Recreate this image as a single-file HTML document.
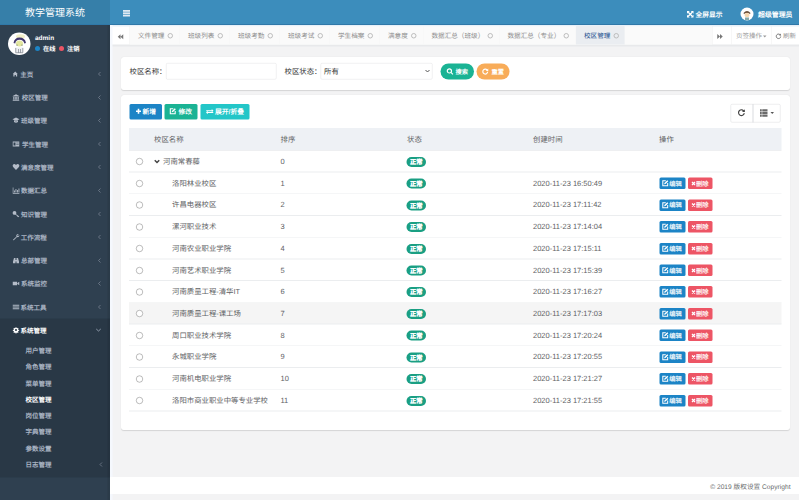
<!DOCTYPE html>
<html lang="zh-CN">
<head>
<meta charset="utf-8">
<style>
html,body{margin:0;padding:0;width:799px;height:500px;overflow:hidden;background:#f3f3f4;}
*{box-sizing:border-box;}
#stage{text-rendering:geometricPrecision;position:absolute;left:0;top:0;width:1598px;height:1000px;transform:scale(0.5);transform-origin:0 0;font-family:"Liberation Sans",sans-serif;font-size:13px;color:#676a6c;background:#f3f3f4;overflow:hidden;}
.a{position:absolute;}
svg.a{overflow:visible;}
.mt{position:absolute;white-space:nowrap;color:#a7b1c2;font-weight:bold;font-size:13px;line-height:20px;}
.mn{-webkit-text-stroke:0;}
.nb{font-weight:bold;-webkit-text-stroke:0;}
.t{position:absolute;white-space:nowrap;font-size:14.75px;color:#5e6164;line-height:20px;}
.radio{position:absolute;width:14px;height:14px;border:1.8px solid #7a7a7a;border-radius:50%;background:#fff;}
.badge{position:absolute;width:39px;height:20px;border-radius:10px;background:#1a9f83;color:#fff;font-size:12.5px;font-weight:bold;-webkit-text-stroke:0.3px #fff;text-align:center;line-height:20px;}
.be{position:absolute;height:23px;border-radius:3px;color:#fff;font-size:12.5px;line-height:23px;white-space:nowrap;}
.hl{position:absolute;height:1.5px;background:#ebedef;}
</style>
</head>
<body>
<div id="stage">

<div class="a" style="left:0;top:0;width:220px;height:1000px;background:#2f4050"></div>
<div class="a" style="left:0;top:0;width:220px;height:50px;background:#367fa9"></div>
<div class="a" style="left:0;top:0;width:220px;height:50px;color:#fff;font-size:20px;text-align:center;line-height:50px;white-space:nowrap">教学管理系统</div>
<div class="a" style="left:0;top:637px;width:220px;height:318px;background:#293846"></div>
<div class="a" style="left:215px;top:50px;width:5px;height:950px;background:rgba(0,0,0,.08)"></div>
<div class="a" style="left:16px;top:65px;width:45px;height:45px;border-radius:50%;background:#fff;overflow:hidden"><svg width="45" height="45" viewBox="0 0 45 45"><ellipse cx="25" cy="8" rx="9" ry="4.5" fill="#f1efc8"/><path d="M11 21 Q13 10 23 10 Q34 10 36 21 L32.5 22 Q31 14.5 23 14.5 Q15.5 14.5 14.5 22Z" fill="#43386e"/><ellipse cx="23" cy="22" rx="7" ry="6" fill="#e3e7a0"/><path d="M14 30 h17 v11 h-17z" fill="#eef0f2"/><path d="M15.5 31 v9 M21 33 v8 M25 33 v8 M29.5 31 v9 M15 40.5 h15" stroke="#8a8f98" stroke-width="1.6" fill="none"/><circle cx="18" cy="25" r="1.2" fill="#55606a"/><circle cx="28" cy="25" r="1.2" fill="#55606a"/></svg></div>
<div class="mt nb" style="left:70px;top:66px;color:#fff;font-size:13px">admin</div>
<div class="a" style="left:70px;top:92px;width:10px;height:10px;border-radius:50%;background:#1c84c6"></div>
<div class="mt nb" style="left:86px;top:87px;color:#fff;font-size:12.5px">在线</div>
<div class="a" style="left:118px;top:92px;width:10px;height:10px;border-radius:50%;background:#ed5565"></div>
<div class="mt nb" style="left:134px;top:87px;color:#fff;font-size:12.5px">注销</div>
<svg class="a" style="left:25.0px;top:141.0px" width="14" height="14" viewBox="0 0 14 14" fill="#b4bcc8"><path d="M0.5 7 L5.5 2 L10.5 7 L9.3 7 L9.3 12 L6.8 12 L6.8 9 L4.2 9 L4.2 12 L1.7 12 L1.7 7Z"/></svg>
<div class="mt nb" style="left:40.5px;top:139.0px;color:#aab4c3">主页</div>
<svg class="a" style="left:195px;top:143.0px" width="8" height="10" viewBox="0 0 8 10"><path d="M6 1 L2 5 L6 9" stroke="#7f8a99" stroke-width="1.4" fill="none"/></svg>
<svg class="a" style="left:25.0px;top:187.6px" width="14" height="14" viewBox="0 0 14 14" fill="#b4bcc8"><path d="M7 0.5 L13.5 4 L13.5 5 L0.5 5 L0.5 4Z M1.5 6 h2 v5 h-2z M4.5 6 h2 v5 h-2z M7.5 6 h2 v5 h-2z M10.5 6 h2 v5 h-2z M0.5 11.5 h13 v2 h-13z"/></svg>
<div class="mt nb" style="left:43.5px;top:185.6px;color:#aab4c3">校区管理</div>
<svg class="a" style="left:195px;top:189.6px" width="8" height="10" viewBox="0 0 8 10"><path d="M6 1 L2 5 L6 9" stroke="#7f8a99" stroke-width="1.4" fill="none"/></svg>
<svg class="a" style="left:25.0px;top:234.2px" width="14" height="14" viewBox="0 0 14 14" fill="#b4bcc8"><path d="M7 1 L14 4.5 L7 8 L0 4.5Z M3 6.5 L3 10 Q7 13 11 10 L11 6.5 L7 9Z"/></svg>
<div class="mt nb" style="left:42px;top:232.2px;color:#aab4c3">班级管理</div>
<svg class="a" style="left:195px;top:236.2px" width="8" height="10" viewBox="0 0 8 10"><path d="M6 1 L2 5 L6 9" stroke="#7f8a99" stroke-width="1.4" fill="none"/></svg>
<svg class="a" style="left:25.0px;top:280.7px" width="14" height="14" viewBox="0 0 14 14" fill="#b4bcc8"><path d="M0.5 2 h13 v10 h-13z M2 4 v6 h4 v-6z M7.5 4.5 h5 v1.2 h-5z M7.5 7 h5 v1.2 h-5z" fill-rule="evenodd"/></svg>
<div class="mt nb" style="left:44px;top:278.7px;color:#aab4c3">学生管理</div>
<svg class="a" style="left:195px;top:282.7px" width="8" height="10" viewBox="0 0 8 10"><path d="M6 1 L2 5 L6 9" stroke="#7f8a99" stroke-width="1.4" fill="none"/></svg>
<svg class="a" style="left:25.0px;top:327.3px" width="14" height="14" viewBox="0 0 14 14" fill="#b4bcc8"><path d="M7 13 L1.2 7.2 Q-0.8 4.5 1.2 2 Q4 -0.3 7 2.8 Q10 -0.3 12.8 2 Q14.8 4.5 12.8 7.2Z"/></svg>
<div class="mt nb" style="left:42px;top:325.3px;color:#aab4c3">满意度管理</div>
<svg class="a" style="left:195px;top:329.3px" width="8" height="10" viewBox="0 0 8 10"><path d="M6 1 L2 5 L6 9" stroke="#7f8a99" stroke-width="1.4" fill="none"/></svg>
<svg class="a" style="left:25.0px;top:373.9px" width="14" height="14" viewBox="0 0 14 14" fill="#b4bcc8"><path d="M0.5 1 h1.3 v11 h12 v1.3 h-13.3z M3 7 h1.8 v4 h-1.8z M6 4 h1.8 v7 h-1.8z M9 6 h1.8 v5 h-1.8z M12 3 h1.8 v8 h-1.8z"/></svg>
<div class="mt nb" style="left:42px;top:371.9px;color:#aab4c3">数据汇总</div>
<svg class="a" style="left:195px;top:375.9px" width="8" height="10" viewBox="0 0 8 10"><path d="M6 1 L2 5 L6 9" stroke="#7f8a99" stroke-width="1.4" fill="none"/></svg>
<svg class="a" style="left:25.0px;top:420.5px" width="14" height="14" viewBox="0 0 14 14" fill="#b4bcc8"><path d="M4 1 A3.8 3.8 0 1 1 4 8.6 A3.8 3.8 0 1 1 4 1Z M6.5 6.5 L13.5 12 L12 13.5 L11 12.5 L10 13.2 L9.2 12.2 L10 11.4 L5.5 7.8Z"/></svg>
<div class="mt nb" style="left:42px;top:418.5px;color:#aab4c3">知识管理</div>
<svg class="a" style="left:195px;top:422.5px" width="8" height="10" viewBox="0 0 8 10"><path d="M6 1 L2 5 L6 9" stroke="#7f8a99" stroke-width="1.4" fill="none"/></svg>
<svg class="a" style="left:25.0px;top:467.1px" width="14" height="14" viewBox="0 0 14 14" fill="#b4bcc8"><path d="M13 1.5 Q9.5 0 8 3 Q7.3 4.6 8 6 L1 12.5 Q1.5 13.5 2.5 13.5 L9 7 Q11 7.8 12.5 6.5 Q14 5 13.5 3 L11.5 5 L9.8 4.5 L9.5 2.8Z"/></svg>
<div class="mt nb" style="left:41.5px;top:465.1px;color:#aab4c3">工作流程</div>
<svg class="a" style="left:195px;top:469.1px" width="8" height="10" viewBox="0 0 8 10"><path d="M6 1 L2 5 L6 9" stroke="#7f8a99" stroke-width="1.4" fill="none"/></svg>
<svg class="a" style="left:25.0px;top:513.6px" width="14" height="14" viewBox="0 0 14 14" fill="#b4bcc8"><path d="M1 9 L3 2 h3 v4 h2 v-4 h3 l2 7 v3.5 h-5 v-3.5 h-2 v3.5 h-5z"/></svg>
<div class="mt nb" style="left:42px;top:511.6px;color:#aab4c3">总部管理</div>
<svg class="a" style="left:195px;top:515.6px" width="8" height="10" viewBox="0 0 8 10"><path d="M6 1 L2 5 L6 9" stroke="#7f8a99" stroke-width="1.4" fill="none"/></svg>
<svg class="a" style="left:25.0px;top:560.2px" width="14" height="14" viewBox="0 0 14 14" fill="#b4bcc8"><path d="M0.5 3.5 h8.5 v7 h-8.5z M9.5 6 L13.5 3.5 v7 L9.5 8z"/></svg>
<div class="mt nb" style="left:42px;top:558.2px;color:#aab4c3">系统监控</div>
<svg class="a" style="left:195px;top:562.2px" width="8" height="10" viewBox="0 0 8 10"><path d="M6 1 L2 5 L6 9" stroke="#7f8a99" stroke-width="1.4" fill="none"/></svg>
<svg class="a" style="left:25.0px;top:606.8px" width="14" height="14" viewBox="0 0 14 14" fill="#b4bcc8"><path d="M0.5 2.5 h13 v1.8 h-13z M0.5 6.1 h13 v1.8 h-13z M0.5 9.7 h13 v1.8 h-13z"/></svg>
<div class="mt nb" style="left:41px;top:604.8px;color:#aab4c3">系统工具</div>
<svg class="a" style="left:195px;top:608.8px" width="8" height="10" viewBox="0 0 8 10"><path d="M6 1 L2 5 L6 9" stroke="#7f8a99" stroke-width="1.4" fill="none"/></svg>
<svg class="a" style="left:26.0px;top:654.4px" width="12" height="12" viewBox="0 0 14 14" fill="#fff"><path d="M6 0.5 h2 l0.4 2 l1.4 0.6 l1.7 -1.1 l1.4 1.4 l-1.1 1.7 l0.6 1.4 l2 0.4 v2 l-2 0.4 l-0.6 1.4 l1.1 1.7 l-1.4 1.4 l-1.7 -1.1 l-1.4 0.6 l-0.4 2 h-2 l-0.4 -2 l-1.4 -0.6 l-1.7 1.1 l-1.4 -1.4 l1.1 -1.7 l-0.6 -1.4 l-2 -0.4 v-2 l2 -0.4 l0.6 -1.4 l-1.1 -1.7 l1.4 -1.4 l1.7 1.1 l1.4 -0.6z M7 4.6 A2.4 2.4 0 1 0 7 9.4 A2.4 2.4 0 1 0 7 4.6Z" fill-rule="evenodd"/></svg>
<div class="mt nb" style="left:41px;top:651.4px;color:#fff">系统管理</div>
<svg class="a" style="left:191px;top:656.4px" width="12" height="8" viewBox="0 0 12 8"><path d="M1.5 2 L6 6 L10.5 2" stroke="#a7b1c2" stroke-width="1.6" fill="none"/></svg>
<div class="mt nb" style="left:51px;top:691.5px;color:#aab4c3">用户管理</div>
<div class="mt nb" style="left:51px;top:724.0px;color:#aab4c3">角色管理</div>
<div class="mt nb" style="left:51px;top:756.6px;color:#aab4c3">菜单管理</div>
<div class="mt nb" style="left:51px;top:789.1px;color:#fff">校区管理</div>
<div class="mt nb" style="left:51px;top:821.7px;color:#aab4c3">岗位管理</div>
<div class="mt nb" style="left:51px;top:854.2px;color:#aab4c3">字典管理</div>
<div class="mt nb" style="left:51px;top:886.8px;color:#aab4c3">参数设置</div>
<div class="mt nb" style="left:51px;top:919.3px;color:#aab4c3">日志管理</div>
<svg class="a" style="left:198px;top:924.3px" width="8" height="10" viewBox="0 0 8 10"><path d="M6 1 L2 5 L6 9" stroke="#7f8a99" stroke-width="1.4" fill="none"/></svg>
<div class="a" style="left:220px;top:0;width:1378px;height:50px;background:#3c8dbc"></div>
<div class="a" style="left:0;top:48px;width:1598px;height:2px;background:#2f78a8"></div>
<svg class="a" style="left:246px;top:20px" width="14" height="13" viewBox="0 0 14 13" fill="#dfe9f2"><rect x="0" y="0" width="14" height="3.6"/><rect x="0" y="4.7" width="14" height="3.6"/><rect x="0" y="9.4" width="14" height="3.6"/></svg>
<svg class="a" style="left:1374px;top:22px" width="13" height="13" viewBox="0 0 13 13" fill="#fff"><path d="M2.5 2.5 L10.5 10.5 M10.5 2.5 L2.5 10.5" stroke="#fff" stroke-width="2.6"/><path d="M0 0 h5.5 l-5.5 5.5z M13 0 v5.5 l-5.5 -5.5z M0 13 v-5.5 l5.5 5.5z M13 13 h-5.5 l5.5 -5.5z"/></svg>
<div class="mt mn" style="left:1391px;top:19px;color:#fff;font-size:13.5px">全屏显示</div>
<div class="a" style="left:1481px;top:15px;width:26px;height:26px;border-radius:50%;background:#fff;overflow:hidden"><svg width="26" height="26" viewBox="0 0 26 26"><path d="M6 11 Q13 3 20 11 L19 13 Q13 9 7 13Z" fill="#6b4f3a"/><ellipse cx="13" cy="15" rx="5" ry="4.5" fill="#f6d7b0"/><rect x="9" y="20" width="8" height="6" fill="#8aa"/></svg></div>
<div class="mt mn" style="left:1516px;top:19px;color:#fff;font-size:13.8px">超级管理员</div>
<div class="a" style="left:220px;top:50px;width:1378px;height:40px;background:#fff"></div>
<div class="a" style="left:220px;top:50px;width:1378px;height:3px;background:#e6f0f8"></div>
<div class="a" style="left:224px;top:89px;width:1374px;height:4px;background:#e8e9eb"></div>
<div class="a" style="left:260px;top:53px;width:1164px;height:36px;background:#fafafa"></div>
<svg class="a" style="left:235px;top:67px" width="12" height="13" viewBox="0 0 12 12" fill="#777"><path d="M6 1 L0.5 6 L6 11z M11.5 1 L6 6 L11.5 11z"/></svg>
<div class="a" style="left:259px;top:52px;width:1px;height:37px;background:#eee"></div>
<div class="a" style="left:260px;top:52px;width:100px;height:37px;border-right:1px solid #f6f6f6"></div>
<div class="mt" style="left:276px;top:61px;color:#8c8c8c;font-weight:normal;font-size:13.2px">文件管理</div>
<div class="a" style="left:334.9px;top:65.5px;width:11px;height:11px;border:2px solid #bcbcbc;border-radius:50%"></div>
<div class="a" style="left:360px;top:52px;width:100px;height:37px;border-right:1px solid #f6f6f6"></div>
<div class="mt" style="left:376px;top:61px;color:#8c8c8c;font-weight:normal;font-size:13.2px">班级列表</div>
<div class="a" style="left:434.9px;top:65.5px;width:11px;height:11px;border:2px solid #bcbcbc;border-radius:50%"></div>
<div class="a" style="left:460px;top:52px;width:100px;height:37px;border-right:1px solid #f6f6f6"></div>
<div class="mt" style="left:476px;top:61px;color:#8c8c8c;font-weight:normal;font-size:13.2px">班级考勤</div>
<div class="a" style="left:534.9px;top:65.5px;width:11px;height:11px;border:2px solid #bcbcbc;border-radius:50%"></div>
<div class="a" style="left:560px;top:52px;width:100px;height:37px;border-right:1px solid #f6f6f6"></div>
<div class="mt" style="left:576px;top:61px;color:#8c8c8c;font-weight:normal;font-size:13.2px">班级考试</div>
<div class="a" style="left:634.9px;top:65.5px;width:11px;height:11px;border:2px solid #bcbcbc;border-radius:50%"></div>
<div class="a" style="left:660px;top:52px;width:100px;height:37px;border-right:1px solid #f6f6f6"></div>
<div class="mt" style="left:676px;top:61px;color:#8c8c8c;font-weight:normal;font-size:13.2px">学生档案</div>
<div class="a" style="left:734.9px;top:65.5px;width:11px;height:11px;border:2px solid #bcbcbc;border-radius:50%"></div>
<div class="a" style="left:760px;top:52px;width:87px;height:37px;border-right:1px solid #f6f6f6"></div>
<div class="mt" style="left:776px;top:61px;color:#8c8c8c;font-weight:normal;font-size:13.2px">满意度</div>
<div class="a" style="left:821.7px;top:65.5px;width:11px;height:11px;border:2px solid #bcbcbc;border-radius:50%"></div>
<div class="a" style="left:847px;top:52px;width:152px;height:37px;border-right:1px solid #f6f6f6"></div>
<div class="mt" style="left:863px;top:61px;color:#8c8c8c;font-weight:normal;font-size:13.2px">数据汇总（班级）</div>
<div class="a" style="left:974.7px;top:65.5px;width:11px;height:11px;border:2px solid #bcbcbc;border-radius:50%"></div>
<div class="a" style="left:999px;top:52px;width:153px;height:37px;border-right:1px solid #f6f6f6"></div>
<div class="mt" style="left:1015px;top:61px;color:#8c8c8c;font-weight:normal;font-size:13.2px">数据汇总（专业）</div>
<div class="a" style="left:1126.7px;top:65.5px;width:11px;height:11px;border:2px solid #bcbcbc;border-radius:50%"></div>
<div class="a" style="left:1152px;top:52px;width:98px;height:37px;background:#eaedf1;border-right:1px solid #f6f6f6"></div>
<div class="mt" style="left:1168px;top:61px;color:#23508e;font-weight:normal;font-size:13.2px">校区管理</div>
<div class="a" style="left:1226.9px;top:65.5px;width:11px;height:11px;border:2px solid #bcbcbc;border-radius:50%"></div>
<div class="a" style="left:1424px;top:52px;width:1px;height:37px;background:#eee"></div>
<svg class="a" style="left:1434px;top:67px" width="12" height="12" viewBox="0 0 12 12" fill="#777"><path d="M0.5 1 L6 6 L0.5 11z M6 1 L11.5 6 L6 11z"/></svg>
<div class="a" style="left:1462px;top:52px;width:1px;height:37px;background:#eee"></div>
<div class="mt" style="left:1472px;top:62px;color:#999;font-weight:normal;font-size:13px">页签操作</div>
<svg class="a" style="left:1526px;top:71px" width="7" height="5" viewBox="0 0 7 5" fill="#999"><path d="M0 0 h7 l-3.5 4z"/></svg>
<div class="a" style="left:1543px;top:52px;width:1px;height:37px;background:#eee"></div>
<svg class="a" style="left:1551px;top:66px" width="12" height="12" viewBox="0 0 12 12" fill="none" stroke="#777" stroke-width="2"><path d="M10 4.5 A4.5 4.5 0 1 0 10.5 7"/><path d="M11 1 v4 h-4z" fill="#777" stroke="none"/></svg>
<div class="mt" style="left:1566px;top:62px;color:#999;font-weight:normal;font-size:13px">刷新</div>
<div class="a" style="left:220px;top:50px;width:4.5px;height:950px;background:#f5f8fd"></div>
<div class="a" style="left:242px;top:114px;width:1338px;height:66px;background:#fff;border-radius:6px;box-shadow:0 1px 2px rgba(0,0,0,.13)"></div>
<div class="a" style="left:242px;top:190px;width:1338px;height:670px;background:#fff;border-radius:6px;box-shadow:0 1px 2px rgba(0,0,0,.13)"></div>
<div class="t" style="left:259px;top:134px;color:#333">校区名称：</div>
<div class="a" style="left:332px;top:126px;width:221px;height:33px;border:1.5px solid #e0e1e3;border-radius:3px;background:#fff"></div>
<div class="t" style="left:569px;top:134px;color:#333">校区状态：</div>
<div class="a" style="left:641px;top:126px;width:224px;height:33px;border:1.5px solid #e0e1e3;border-radius:3px;background:#fff"></div>
<div class="t" style="left:648px;top:134px;color:#333">所有</div>
<svg class="a" style="left:850px;top:138px" width="10" height="8" viewBox="0 0 10 8"><path d="M1 2 L5 6 L9 2" stroke="#555" stroke-width="2" fill="none"/></svg>
<div class="a" style="left:881px;top:127px;width:67px;height:32px;border-radius:16px;background:#1ab394"></div>
<svg class="a" style="left:893px;top:136px" width="14" height="14" viewBox="0 0 14 14" fill="none" stroke="#fff" stroke-width="2.4"><circle cx="5.8" cy="5.8" r="4.2"/><path d="M8.8 8.8 L12.8 12.8"/></svg>
<div class="mt mn" style="left:911px;top:133px;color:#fff;font-size:12.5px">搜索</div>
<div class="a" style="left:953px;top:127px;width:66px;height:32px;border-radius:16px;background:#f8ac59"></div>
<svg class="a" style="left:964px;top:136px" width="13" height="13" viewBox="0 0 12 12" fill="none" stroke="#fff" stroke-width="2.2"><path d="M10 4.5 A4.5 4.5 0 1 0 10.5 7"/><path d="M11.5 0.8 v4.6 h-4.6z" fill="#fff" stroke="none"/></svg>
<div class="mt mn" style="left:983px;top:133px;color:#fff;font-size:12.5px">重置</div>
<div class="a" style="left:259px;top:208px;width:65px;height:31px;border-radius:3px;background:#1c84c6"></div>
<svg class="a" style="left:272px;top:217px" width="10" height="11" viewBox="0 0 10 11" fill="#fff"><path d="M3.4 0.5 h3.2 v3.4 h3.4 v3.2 h-3.4 v3.4 h-3.2 v-3.4 h-3.4 v-3.2 h3.4z"/></svg>
<div class="mt mn" style="left:285px;top:214px;color:#fff;font-size:13.5px">新增</div>
<div class="a" style="left:329px;top:208px;width:66px;height:31px;border-radius:3px;background:#1ab394"></div>
<svg class="a" style="left:339px;top:216px" width="13" height="13" viewBox="0 0 12 12" fill="none" stroke="#fff" stroke-width="2"><path d="M7 1.5 H1.5 V10.5 H10.5 V5.5"/><path d="M4 8 L4.5 5.5 L9.8 0.3 L11.7 2.2 L6.5 7.5z" fill="#fff" stroke="none"/></svg>
<div class="mt mn" style="left:357px;top:214px;color:#fff;font-size:13.5px">修改</div>
<div class="a" style="left:401px;top:208px;width:98px;height:31px;border-radius:3px;background:#23c6c8"></div>
<svg class="a" style="left:412px;top:218px" width="15" height="11" viewBox="0 0 15 11" fill="#fff"><path d="M0.5 2.5 h11 v-2.5 l3.5 3.5 l-3.5 3.5 v-2.5 h-11z M14.5 8.5 h-11 v2.5 l-3.5 -3.5 l3.5 -3.5 v2.5 h11z" transform="scale(1,0.95)"/></svg>
<div class="mt mn" style="left:430px;top:214px;color:#fff;font-size:13.5px">展开/折叠</div>
<div class="a" style="left:1461px;top:208px;width:100px;height:37px;border:1.5px solid #dadcdf;border-radius:3px;background:#fff"></div>
<div class="a" style="left:1505px;top:208px;width:1.5px;height:37px;background:#dadcdf"></div>
<svg class="a" style="left:1475px;top:217px" width="16" height="16" viewBox="0 0 16 16" fill="none" stroke="#444" stroke-width="2.3"><path d="M13.2 6 A5.8 5.8 0 1 0 13.6 9.4"/><path d="M14.6 1.5 v5.6 h-5.6z" fill="#444" stroke="none"/></svg>
<svg class="a" style="left:1520px;top:218px" width="15" height="16" viewBox="0 0 15 16" fill="#6a6a6a"><rect x="0" y="0.5" width="3.5" height="4.4"/><rect x="0" y="5.8" width="3.5" height="4.4"/><rect x="0" y="11.1" width="3.5" height="4.4"/><rect x="4.5" y="0.5" width="10.5" height="4.4"/><rect x="4.5" y="5.8" width="10.5" height="4.4"/><rect x="4.5" y="11.1" width="10.5" height="4.4"/></svg>
<svg class="a" style="left:1541px;top:224px" width="7" height="5" viewBox="0 0 7 5" fill="#555"><path d="M0 0 h7 l-3.5 4z"/></svg>
<div class="a" style="left:258px;top:256px;width:1305px;height:44px;background:#eef1f5"></div>
<div class="hl" style="left:258px;top:299.5px;width:1305px;background:#dcdfe3"></div>
<div class="t" style="left:308px;top:270px">校区名称</div>
<div class="t" style="left:561px;top:270px">排序</div>
<div class="t" style="left:814px;top:270px">状态</div>
<div class="t" style="left:1066px;top:270px">创建时间</div>
<div class="t" style="left:1318px;top:270px">操作</div>
<div class="hl" style="left:258px;top:343.3px;width:1305px"></div>
<div class="radio" style="left:272px;top:316.3px"></div>
<svg class="a" style="left:308px;top:318.8px" width="12" height="9" viewBox="0 0 12 9"><path d="M1.5 1.5 L6 6 L10.5 1.5" stroke="#444" stroke-width="3" fill="none"/></svg>
<div class="t" style="left:326px;top:313.3px">河南常春藤</div>
<div class="t" style="left:561px;top:313.3px;font-size:15px">0</div>
<div class="badge mn" style="left:813px;top:313.8px">正常</div>
<div class="hl" style="left:258px;top:386.7px;width:1305px"></div>
<div class="radio" style="left:272px;top:359.7px"></div>
<div class="t" style="left:344px;top:356.7px">洛阳林业校区</div>
<div class="t" style="left:561px;top:356.7px;font-size:15px">1</div>
<div class="badge mn" style="left:813px;top:357.2px">正常</div>
<div class="t" style="left:1066px;top:356.7px;font-size:15px">2020-11-23 16:50:49</div>
<div class="be" style="left:1319px;top:355.2px;width:52px;background:#1c84c6"></div>
<svg class="a" style="left:1324px;top:360.2px" width="13" height="13" viewBox="0 0 12 12" fill="none" stroke="#fff" stroke-width="1.9"><path d="M7 1.5 H1.5 V10.5 H10.5 V5.5"/><path d="M4 8 L4.5 5.5 L9.8 0.3 L11.7 2.2 L6.5 7.5z" fill="#fff" stroke="none"/></svg>
<div class="mt" style="left:1338.5px;top:356.7px;color:#fff;font-weight:normal;-webkit-text-stroke:0.3px #fff;font-size:12.5px">编辑</div>
<div class="be" style="left:1376px;top:355.2px;width:49px;background:#ed5565"></div>
<svg class="a" style="left:1382.5px;top:362.7px" width="8" height="8" viewBox="0 0 8 8" stroke="#fff" stroke-width="2.6"><path d="M1 1 L7 7 M7 1 L1 7"/></svg>
<div class="mt" style="left:1392px;top:356.7px;color:#fff;font-weight:normal;-webkit-text-stroke:0.3px #fff;font-size:12.5px">删除</div>
<div class="hl" style="left:258px;top:430.1px;width:1305px"></div>
<div class="radio" style="left:272px;top:403.2px"></div>
<div class="t" style="left:344px;top:400.2px">许昌电器校区</div>
<div class="t" style="left:561px;top:400.2px;font-size:15px">2</div>
<div class="badge mn" style="left:813px;top:400.7px">正常</div>
<div class="t" style="left:1066px;top:400.2px;font-size:15px">2020-11-23 17:11:42</div>
<div class="be" style="left:1319px;top:398.7px;width:52px;background:#1c84c6"></div>
<svg class="a" style="left:1324px;top:403.7px" width="13" height="13" viewBox="0 0 12 12" fill="none" stroke="#fff" stroke-width="1.9"><path d="M7 1.5 H1.5 V10.5 H10.5 V5.5"/><path d="M4 8 L4.5 5.5 L9.8 0.3 L11.7 2.2 L6.5 7.5z" fill="#fff" stroke="none"/></svg>
<div class="mt" style="left:1338.5px;top:400.2px;color:#fff;font-weight:normal;-webkit-text-stroke:0.3px #fff;font-size:12.5px">编辑</div>
<div class="be" style="left:1376px;top:398.7px;width:49px;background:#ed5565"></div>
<svg class="a" style="left:1382.5px;top:406.2px" width="8" height="8" viewBox="0 0 8 8" stroke="#fff" stroke-width="2.6"><path d="M1 1 L7 7 M7 1 L1 7"/></svg>
<div class="mt" style="left:1392px;top:400.2px;color:#fff;font-weight:normal;-webkit-text-stroke:0.3px #fff;font-size:12.5px">删除</div>
<div class="hl" style="left:258px;top:473.6px;width:1305px"></div>
<div class="radio" style="left:272px;top:446.6px"></div>
<div class="t" style="left:344px;top:443.6px">漯河职业技术</div>
<div class="t" style="left:561px;top:443.6px;font-size:15px">3</div>
<div class="badge mn" style="left:813px;top:444.1px">正常</div>
<div class="t" style="left:1066px;top:443.6px;font-size:15px">2020-11-23 17:14:04</div>
<div class="be" style="left:1319px;top:442.1px;width:52px;background:#1c84c6"></div>
<svg class="a" style="left:1324px;top:447.1px" width="13" height="13" viewBox="0 0 12 12" fill="none" stroke="#fff" stroke-width="1.9"><path d="M7 1.5 H1.5 V10.5 H10.5 V5.5"/><path d="M4 8 L4.5 5.5 L9.8 0.3 L11.7 2.2 L6.5 7.5z" fill="#fff" stroke="none"/></svg>
<div class="mt" style="left:1338.5px;top:443.6px;color:#fff;font-weight:normal;-webkit-text-stroke:0.3px #fff;font-size:12.5px">编辑</div>
<div class="be" style="left:1376px;top:442.1px;width:49px;background:#ed5565"></div>
<svg class="a" style="left:1382.5px;top:449.6px" width="8" height="8" viewBox="0 0 8 8" stroke="#fff" stroke-width="2.6"><path d="M1 1 L7 7 M7 1 L1 7"/></svg>
<div class="mt" style="left:1392px;top:443.6px;color:#fff;font-weight:normal;-webkit-text-stroke:0.3px #fff;font-size:12.5px">删除</div>
<div class="hl" style="left:258px;top:517.0px;width:1305px"></div>
<div class="radio" style="left:272px;top:490.0px"></div>
<div class="t" style="left:344px;top:487.0px">河南农业职业学院</div>
<div class="t" style="left:561px;top:487.0px;font-size:15px">4</div>
<div class="badge mn" style="left:813px;top:487.5px">正常</div>
<div class="t" style="left:1066px;top:487.0px;font-size:15px">2020-11-23 17:15:11</div>
<div class="be" style="left:1319px;top:485.5px;width:52px;background:#1c84c6"></div>
<svg class="a" style="left:1324px;top:490.5px" width="13" height="13" viewBox="0 0 12 12" fill="none" stroke="#fff" stroke-width="1.9"><path d="M7 1.5 H1.5 V10.5 H10.5 V5.5"/><path d="M4 8 L4.5 5.5 L9.8 0.3 L11.7 2.2 L6.5 7.5z" fill="#fff" stroke="none"/></svg>
<div class="mt" style="left:1338.5px;top:487.0px;color:#fff;font-weight:normal;-webkit-text-stroke:0.3px #fff;font-size:12.5px">编辑</div>
<div class="be" style="left:1376px;top:485.5px;width:49px;background:#ed5565"></div>
<svg class="a" style="left:1382.5px;top:493.0px" width="8" height="8" viewBox="0 0 8 8" stroke="#fff" stroke-width="2.6"><path d="M1 1 L7 7 M7 1 L1 7"/></svg>
<div class="mt" style="left:1392px;top:487.0px;color:#fff;font-weight:normal;-webkit-text-stroke:0.3px #fff;font-size:12.5px">删除</div>
<div class="hl" style="left:258px;top:560.4px;width:1305px"></div>
<div class="radio" style="left:272px;top:533.5px"></div>
<div class="t" style="left:344px;top:530.5px">河南艺术职业学院</div>
<div class="t" style="left:561px;top:530.5px;font-size:15px">5</div>
<div class="badge mn" style="left:813px;top:531.0px">正常</div>
<div class="t" style="left:1066px;top:530.5px;font-size:15px">2020-11-23 17:15:39</div>
<div class="be" style="left:1319px;top:529.0px;width:52px;background:#1c84c6"></div>
<svg class="a" style="left:1324px;top:534.0px" width="13" height="13" viewBox="0 0 12 12" fill="none" stroke="#fff" stroke-width="1.9"><path d="M7 1.5 H1.5 V10.5 H10.5 V5.5"/><path d="M4 8 L4.5 5.5 L9.8 0.3 L11.7 2.2 L6.5 7.5z" fill="#fff" stroke="none"/></svg>
<div class="mt" style="left:1338.5px;top:530.5px;color:#fff;font-weight:normal;-webkit-text-stroke:0.3px #fff;font-size:12.5px">编辑</div>
<div class="be" style="left:1376px;top:529.0px;width:49px;background:#ed5565"></div>
<svg class="a" style="left:1382.5px;top:536.5px" width="8" height="8" viewBox="0 0 8 8" stroke="#fff" stroke-width="2.6"><path d="M1 1 L7 7 M7 1 L1 7"/></svg>
<div class="mt" style="left:1392px;top:530.5px;color:#fff;font-weight:normal;-webkit-text-stroke:0.3px #fff;font-size:12.5px">删除</div>
<div class="hl" style="left:258px;top:603.9px;width:1305px"></div>
<div class="radio" style="left:272px;top:576.9px"></div>
<div class="t" style="left:344px;top:573.9px">河南质量工程-清华IT</div>
<div class="t" style="left:561px;top:573.9px;font-size:15px">6</div>
<div class="badge mn" style="left:813px;top:574.4px">正常</div>
<div class="t" style="left:1066px;top:573.9px;font-size:15px">2020-11-23 17:16:27</div>
<div class="be" style="left:1319px;top:572.4px;width:52px;background:#1c84c6"></div>
<svg class="a" style="left:1324px;top:577.4px" width="13" height="13" viewBox="0 0 12 12" fill="none" stroke="#fff" stroke-width="1.9"><path d="M7 1.5 H1.5 V10.5 H10.5 V5.5"/><path d="M4 8 L4.5 5.5 L9.8 0.3 L11.7 2.2 L6.5 7.5z" fill="#fff" stroke="none"/></svg>
<div class="mt" style="left:1338.5px;top:573.9px;color:#fff;font-weight:normal;-webkit-text-stroke:0.3px #fff;font-size:12.5px">编辑</div>
<div class="be" style="left:1376px;top:572.4px;width:49px;background:#ed5565"></div>
<svg class="a" style="left:1382.5px;top:579.9px" width="8" height="8" viewBox="0 0 8 8" stroke="#fff" stroke-width="2.6"><path d="M1 1 L7 7 M7 1 L1 7"/></svg>
<div class="mt" style="left:1392px;top:573.9px;color:#fff;font-weight:normal;-webkit-text-stroke:0.3px #fff;font-size:12.5px">删除</div>
<div class="a" style="left:258px;top:604.6px;width:1305px;height:43.4px;background:#f5f5f5"></div>
<div class="hl" style="left:258px;top:647.3px;width:1305px"></div>
<div class="radio" style="left:272px;top:620.3px"></div>
<div class="t" style="left:344px;top:617.3px">河南质量工程-课工场</div>
<div class="t" style="left:561px;top:617.3px;font-size:15px">7</div>
<div class="badge mn" style="left:813px;top:617.8px">正常</div>
<div class="t" style="left:1066px;top:617.3px;font-size:15px">2020-11-23 17:17:03</div>
<div class="be" style="left:1319px;top:615.8px;width:52px;background:#1c84c6"></div>
<svg class="a" style="left:1324px;top:620.8px" width="13" height="13" viewBox="0 0 12 12" fill="none" stroke="#fff" stroke-width="1.9"><path d="M7 1.5 H1.5 V10.5 H10.5 V5.5"/><path d="M4 8 L4.5 5.5 L9.8 0.3 L11.7 2.2 L6.5 7.5z" fill="#fff" stroke="none"/></svg>
<div class="mt" style="left:1338.5px;top:617.3px;color:#fff;font-weight:normal;-webkit-text-stroke:0.3px #fff;font-size:12.5px">编辑</div>
<div class="be" style="left:1376px;top:615.8px;width:49px;background:#ed5565"></div>
<svg class="a" style="left:1382.5px;top:623.3px" width="8" height="8" viewBox="0 0 8 8" stroke="#fff" stroke-width="2.6"><path d="M1 1 L7 7 M7 1 L1 7"/></svg>
<div class="mt" style="left:1392px;top:617.3px;color:#fff;font-weight:normal;-webkit-text-stroke:0.3px #fff;font-size:12.5px">删除</div>
<div class="hl" style="left:258px;top:690.7px;width:1305px"></div>
<div class="radio" style="left:272px;top:663.8px"></div>
<div class="t" style="left:344px;top:660.8px">周口职业技术学院</div>
<div class="t" style="left:561px;top:660.8px;font-size:15px">8</div>
<div class="badge mn" style="left:813px;top:661.3px">正常</div>
<div class="t" style="left:1066px;top:660.8px;font-size:15px">2020-11-23 17:20:24</div>
<div class="be" style="left:1319px;top:659.3px;width:52px;background:#1c84c6"></div>
<svg class="a" style="left:1324px;top:664.3px" width="13" height="13" viewBox="0 0 12 12" fill="none" stroke="#fff" stroke-width="1.9"><path d="M7 1.5 H1.5 V10.5 H10.5 V5.5"/><path d="M4 8 L4.5 5.5 L9.8 0.3 L11.7 2.2 L6.5 7.5z" fill="#fff" stroke="none"/></svg>
<div class="mt" style="left:1338.5px;top:660.8px;color:#fff;font-weight:normal;-webkit-text-stroke:0.3px #fff;font-size:12.5px">编辑</div>
<div class="be" style="left:1376px;top:659.3px;width:49px;background:#ed5565"></div>
<svg class="a" style="left:1382.5px;top:666.8px" width="8" height="8" viewBox="0 0 8 8" stroke="#fff" stroke-width="2.6"><path d="M1 1 L7 7 M7 1 L1 7"/></svg>
<div class="mt" style="left:1392px;top:660.8px;color:#fff;font-weight:normal;-webkit-text-stroke:0.3px #fff;font-size:12.5px">删除</div>
<div class="hl" style="left:258px;top:734.1px;width:1305px"></div>
<div class="radio" style="left:272px;top:707.2px"></div>
<div class="t" style="left:344px;top:704.2px">永城职业学院</div>
<div class="t" style="left:561px;top:704.2px;font-size:15px">9</div>
<div class="badge mn" style="left:813px;top:704.7px">正常</div>
<div class="t" style="left:1066px;top:704.2px;font-size:15px">2020-11-23 17:20:55</div>
<div class="be" style="left:1319px;top:702.7px;width:52px;background:#1c84c6"></div>
<svg class="a" style="left:1324px;top:707.7px" width="13" height="13" viewBox="0 0 12 12" fill="none" stroke="#fff" stroke-width="1.9"><path d="M7 1.5 H1.5 V10.5 H10.5 V5.5"/><path d="M4 8 L4.5 5.5 L9.8 0.3 L11.7 2.2 L6.5 7.5z" fill="#fff" stroke="none"/></svg>
<div class="mt" style="left:1338.5px;top:704.2px;color:#fff;font-weight:normal;-webkit-text-stroke:0.3px #fff;font-size:12.5px">编辑</div>
<div class="be" style="left:1376px;top:702.7px;width:49px;background:#ed5565"></div>
<svg class="a" style="left:1382.5px;top:710.2px" width="8" height="8" viewBox="0 0 8 8" stroke="#fff" stroke-width="2.6"><path d="M1 1 L7 7 M7 1 L1 7"/></svg>
<div class="mt" style="left:1392px;top:704.2px;color:#fff;font-weight:normal;-webkit-text-stroke:0.3px #fff;font-size:12.5px">删除</div>
<div class="hl" style="left:258px;top:777.6px;width:1305px"></div>
<div class="radio" style="left:272px;top:750.6px"></div>
<div class="t" style="left:344px;top:747.6px">河南机电职业学院</div>
<div class="t" style="left:561px;top:747.6px;font-size:15px">10</div>
<div class="badge mn" style="left:813px;top:748.1px">正常</div>
<div class="t" style="left:1066px;top:747.6px;font-size:15px">2020-11-23 17:21:27</div>
<div class="be" style="left:1319px;top:746.1px;width:52px;background:#1c84c6"></div>
<svg class="a" style="left:1324px;top:751.1px" width="13" height="13" viewBox="0 0 12 12" fill="none" stroke="#fff" stroke-width="1.9"><path d="M7 1.5 H1.5 V10.5 H10.5 V5.5"/><path d="M4 8 L4.5 5.5 L9.8 0.3 L11.7 2.2 L6.5 7.5z" fill="#fff" stroke="none"/></svg>
<div class="mt" style="left:1338.5px;top:747.6px;color:#fff;font-weight:normal;-webkit-text-stroke:0.3px #fff;font-size:12.5px">编辑</div>
<div class="be" style="left:1376px;top:746.1px;width:49px;background:#ed5565"></div>
<svg class="a" style="left:1382.5px;top:753.6px" width="8" height="8" viewBox="0 0 8 8" stroke="#fff" stroke-width="2.6"><path d="M1 1 L7 7 M7 1 L1 7"/></svg>
<div class="mt" style="left:1392px;top:747.6px;color:#fff;font-weight:normal;-webkit-text-stroke:0.3px #fff;font-size:12.5px">删除</div>
<div class="hl" style="left:258px;top:821.0px;width:1305px"></div>
<div class="radio" style="left:272px;top:794.0px"></div>
<div class="t" style="left:344px;top:791.0px">洛阳市商业职业中等专业学校</div>
<div class="t" style="left:561px;top:791.0px;font-size:15px">11</div>
<div class="badge mn" style="left:813px;top:791.5px">正常</div>
<div class="t" style="left:1066px;top:791.0px;font-size:15px">2020-11-23 17:21:55</div>
<div class="be" style="left:1319px;top:789.5px;width:52px;background:#1c84c6"></div>
<svg class="a" style="left:1324px;top:794.5px" width="13" height="13" viewBox="0 0 12 12" fill="none" stroke="#fff" stroke-width="1.9"><path d="M7 1.5 H1.5 V10.5 H10.5 V5.5"/><path d="M4 8 L4.5 5.5 L9.8 0.3 L11.7 2.2 L6.5 7.5z" fill="#fff" stroke="none"/></svg>
<div class="mt" style="left:1338.5px;top:791.0px;color:#fff;font-weight:normal;-webkit-text-stroke:0.3px #fff;font-size:12.5px">编辑</div>
<div class="be" style="left:1376px;top:789.5px;width:49px;background:#ed5565"></div>
<svg class="a" style="left:1382.5px;top:797.0px" width="8" height="8" viewBox="0 0 8 8" stroke="#fff" stroke-width="2.6"><path d="M1 1 L7 7 M7 1 L1 7"/></svg>
<div class="mt" style="left:1392px;top:791.0px;color:#fff;font-weight:normal;-webkit-text-stroke:0.3px #fff;font-size:12.5px">删除</div>
<div class="a" style="left:220px;top:954px;width:1378px;height:34px;background:#fff"></div>
<div class="t" style="right:17px;top:964px;font-size:13.3px;color:#676a6c">© 2019 版权设置 Copyright</div>
</div>
</body>
</html>
